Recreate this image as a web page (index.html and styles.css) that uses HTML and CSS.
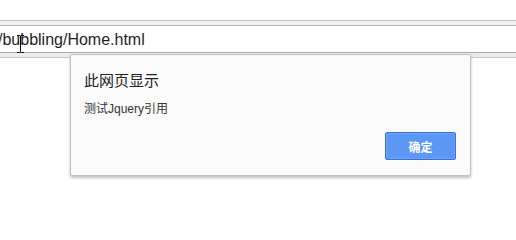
FILE: index.html
```html
<!DOCTYPE html>
<html>
<head>
<meta charset="utf-8">
<link rel="stylesheet" href="styles.css">
</head>
<body>
<div class="page">
  <div class="gap"></div>
  <div class="toolbar"></div>
  <div class="address"><span class="url">/bubbling/Home.html</span></div>
  <div class="band"></div>
</div>
<svg class="ibeam" width="9" height="18" viewBox="0 0 9 18">
  <path d="M1 0.5 H3.5 Q4.5 0.5 4.5 1.5 V16.5 Q4.5 17.5 3.5 17.5 H1 M8 0.5 H5.5 Q4.5 0.5 4.5 1.5 M4.5 16.5 Q4.5 17.5 5.5 17.5 H8" fill="none" stroke="#000" stroke-width="1"/>
</svg>
<div class="dialog">
  <div class="title">此网页显示</div>
  <div class="message">测试Jquery引用</div>
  <div class="actions"><button class="ok">确定</button></div>
</div>
</body>
</html>
```
FILE: styles.css
```css
html, body {
  margin: 0;
  padding: 0;
  background: #fff;
  width: 516px;
  height: 200px;
  overflow: hidden;
  font-family: "Liberation Sans", "Noto Sans CJK SC", Arial, sans-serif;
}
.page {
  display: flex;
  flex-direction: column;
}
.gap {
  height: 20px;
}
.toolbar {
  height: 4px;
  background: #f1f1f1;
  border-top: 1px solid #c3c3c3;
  border-bottom: 1px solid #b4b4b4;
}
.address {
  height: 26px;
  display: flex;
  align-items: center;
  overflow: hidden;
}
.url {
  font-size: 16px;
  color: #1e1e1e;
  margin-left: -2px;
  white-space: nowrap;
  padding-top: 1px;
}
.band {
  height: 4px;
  background: #ececec;
  border-top: 1px solid #ababab;
  border-bottom: 1px solid #c6c6c6;
}
.ibeam {
  position: absolute;
  left: 16px;
  top: 35px;
}
.dialog {
  position: absolute;
  left: 70px;
  top: 54px;
  width: 399px;
  height: 120px;
  background: #fafafa;
  border: 1px solid #c2c2c2;
  border-radius: 2px;
  box-shadow: 0 2px 3px rgba(0,0,0,0.25);
  display: flex;
  flex-direction: column;
  padding: 0 14px 0 13px;
  box-sizing: content-box;
}
.dialog {
  width: 372px;
}
.title {
  margin-top: 16px;
  font-size: 15px;
  line-height: 20px;
  color: #222;
}
.message {
  margin-top: 10px;
  font-size: 12px;
  line-height: 16px;
  color: #333;
}
.actions {
  margin-top: 15px;
  display: flex;
  justify-content: flex-end;
}
.ok {
  width: 71px;
  height: 28px;
  background: #5d97f6;
  border: 1px solid #3b6fd6;
  border-radius: 2px;
  color: #fff;
  font-weight: bold;
  font-size: 12px;
  font-family: "Noto Sans CJK SC", sans-serif;
  padding: 0;
  box-shadow: inset 0 0 0 1px #6fa3f7;
}
```
